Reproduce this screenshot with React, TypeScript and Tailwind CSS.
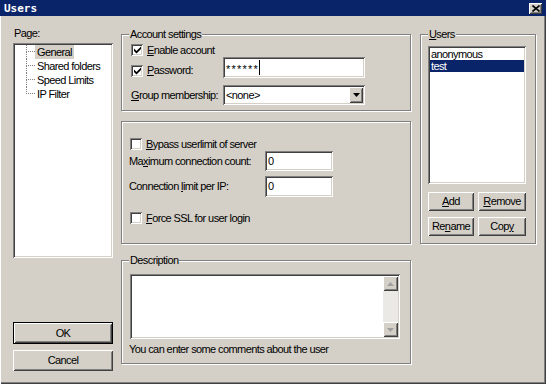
import React from 'react';

const sunken =
	'bg-white shadow-[inset_1px_1px_#808080,inset_-1px_-1px_#ffffff,inset_2px_2px_#404040,inset_-2px_-2px_#d4d0c8]';
const raised =
	'bg-[#d4d0c8] shadow-[inset_1px_1px_#ffffff,inset_-1px_-1px_#404040,inset_2px_2px_#d4d0c8,inset_-2px_-2px_#808080]';
const etched = 'border border-[#808080] shadow-[inset_1px_1px_#ffffff,1px_1px_#ffffff]';

const Key = ({ children }: { children: React.ReactNode }) => <span className="underline">{children}</span>;

const Check = ({ checked }: { checked?: boolean }) => (
	<div className={`w-[12px] h-[12px] shrink-0 flex items-center justify-center ${sunken}`}>
		{checked && (
			<svg width="7" height="8" viewBox="0 0 7 8">
				<path d="M0 2.5 L2.5 5 L7 0.5 V3 L2.5 7.5 L0 5 Z" fill="#000" />
			</svg>
		)}
	</div>
);

interface GroupProps {
	label?: React.ReactNode;
	className?: string;
	children: React.ReactNode;
}

const Group = ({ label, className, children }: GroupProps) => (
	<div className={`relative ${etched} ${className ?? ''}`}>
		{label && <div className="absolute left-[7px] top-[-7px] px-[1px] bg-[#d4d0c8]">{label}</div>}
		{children}
	</div>
);

const Btn = ({ children, className }: { children: React.ReactNode; className?: string }) => (
	<div className={`flex items-center justify-center ${raised} ${className ?? ''}`}>{children}</div>
);

const pages = ['General', 'Shared folders', 'Speed Limits', 'IP Filter'];

const App = () => {
	return (
		<div className="w-[548px] h-[390px] bg-white font-['Liberation_Sans',Arial,sans-serif] text-[11px] leading-[13px] tracking-[-0.6px] text-black">
			<div className="w-[546px] h-[384px] bg-[#d4d0c8] flex flex-col shadow-[inset_1px_0_#ffffff,inset_-1px_-1px_#404040,inset_-2px_-2px_#808080]">
				{/* title bar */}
				<div className="h-[16px] bg-[#0a246a] flex items-center justify-between pl-[4px] pr-[4px]">
					<span className="font-['DejaVu_Sans_Mono',monospace] font-bold text-white text-[11px] tracking-normal">
						Users
					</span>
					<div className={`w-[13px] h-[11px] flex items-center justify-center ${raised}`}>
						<svg width="8" height="7" viewBox="0 0 8 7">
							<path d="M0.5 0.5 L7.5 6.5 M7.5 0.5 L0.5 6.5" stroke="#000" strokeWidth="1.6" />
						</svg>
					</div>
				</div>

				<div className="flex pl-[13px]">
					{/* left column */}
					<div className="w-[100px] flex flex-col pt-[11px]">
						<div className="pl-[1px]">Page:</div>
						<div className={`mt-[3px] h-[215px] pt-[2px] pl-[2px] ${sunken}`}>
							{pages.map((p, i) => (
								<div key={p} className="flex h-[14px]">
									<div className="w-[11px]" />
									<div className="w-[9px] flex flex-col">
										<div className="h-[7px] border-l border-b border-dotted border-[#808080]" />
										<div
											className={`flex-1 ${i < pages.length - 1 ? 'border-l border-dotted border-[#808080]' : ''}`}
										/>
									</div>
									<span className={`px-[2px] leading-[14px] ${i === 0 ? 'bg-[#d4d0c8]' : ''}`}>{p}</span>
								</div>
							))}
						</div>
						<div className="mt-[64px] h-[22px] border border-black">
							<Btn className="h-full">OK</Btn>
						</div>
						<Btn className="mt-[6px] h-[21px]">Cancel</Btn>
					</div>

					{/* middle column */}
					<div className="w-[290px] ml-[8px] flex flex-col pt-[18px]">
						<Group label="Account settings" className="h-[77px] pt-[9px] pl-[9px]">
							<div className="flex items-center h-[12px] gap-[4px]">
								<Check checked />
								<span>
									<Key>E</Key>nable account
								</span>
							</div>
							<div className="flex items-start mt-[1px]">
								<div className="w-[92px] pt-[7px] flex items-center gap-[4px]">
									<Check checked />
									<span>
										<Key>P</Key>assword:
									</span>
								</div>
								<div className={`w-[142px] h-[21px] flex items-center pl-[3px] ${sunken}`}>
									<span className="tracking-[1.2px] pt-[3px]">******</span>
									<span className="w-[1px] h-[15px] bg-black" />
								</div>
							</div>
							<div className="flex items-center mt-[7px]">
								<div className="w-[92px]">
									<Key>G</Key>roup membership:
								</div>
								<div className={`w-[142px] h-[20px] flex items-center justify-between pl-[3px] pr-[2px] ${sunken}`}>
									<span>&lt;none&gt;</span>
									<div className={`w-[14px] h-[16px] flex items-center justify-center ${raised}`}>
										<svg width="7" height="4" viewBox="0 0 7 4">
											<path d="M0 0 H7 L3.5 4 Z" fill="#000" />
										</svg>
									</div>
								</div>
							</div>
						</Group>

						<Group className="mt-[10px] h-[123px] pt-[16px] pl-[7px]">
							<div className="flex items-center h-[12px] gap-[4px] ml-[1px]">
								<Check />
								<span>
									<Key>B</Key>ypass userlimit of server
								</span>
							</div>
							<div className="flex items-center mt-[1px]">
								<div className="w-[136px]">
									Ma<Key>x</Key>imum connection count:
								</div>
								<div className={`w-[68px] h-[20px] flex items-center pl-[3px] ${sunken}`}>0</div>
							</div>
							<div className="flex items-center mt-[5px]">
								<div className="w-[136px]">
									Connection <Key>l</Key>imit per IP:
								</div>
								<div className={`w-[68px] h-[21px] flex items-center pl-[3px] ${sunken}`}>0</div>
							</div>
							<div className="flex items-center h-[12px] gap-[4px] ml-[1px] mt-[15px]">
								<Check />
								<span>
									<Key>F</Key>orce SSL for user login
								</span>
							</div>
						</Group>

						<Group label="Description" className="mt-[16px] h-[104px] pt-[13px] pl-[8px]">
							<div className={`w-[270px] h-[65px] flex justify-end p-[2px] ${sunken}`}>
								<div className="w-[15px] h-full flex flex-col bg-[#ebe9e5]">
									<div className={`h-[15px] flex items-center justify-center ${raised}`}>
										<svg width="7" height="4" viewBox="0 0 7 4">
											<path d="M3.5 0 L7 4 H0 Z" fill="#a0a0a0" />
										</svg>
									</div>
									<div className="flex-1" />
									<div className={`h-[15px] flex items-center justify-center ${raised}`}>
										<svg width="7" height="4" viewBox="0 0 7 4">
											<path d="M0 0 H7 L3.5 4 Z" fill="#a0a0a0" />
										</svg>
									</div>
								</div>
							</div>
							<div className="mt-[4px] -ml-[1px]">You can enter some comments about the user</div>
						</Group>
					</div>

					{/* right column */}
					<div className="w-[116px] ml-[9px] flex flex-col pt-[18px]">
						<Group label={<><Key>U</Key>sers</>} className="h-[210px] pt-[11px] pl-[7px]">
							<div className={`w-[98px] h-[138px] p-[2px] ${sunken}`}>
								<div className="h-[12px] leading-[12px] px-[1px]">anonymous</div>
								<div className="h-[12px] leading-[12px] px-[1px] bg-[#0a246a] text-white">test</div>
							</div>
							<div className="flex gap-[4px] mt-[8px]">
								<Btn className="w-[46px] h-[19px]">
									<Key>A</Key>dd
								</Btn>
								<Btn className="w-[48px] h-[19px]">
									<Key>R</Key>emove
								</Btn>
							</div>
							<div className="flex gap-[4px] mt-[6px]">
								<Btn className="w-[46px] h-[19px]">
									Re<Key>n</Key>ame
								</Btn>
								<Btn className="w-[48px] h-[19px]">
									Cop<Key>y</Key>
								</Btn>
							</div>
						</Group>
					</div>
				</div>
			</div>
		</div>
	);
};

export default App;
